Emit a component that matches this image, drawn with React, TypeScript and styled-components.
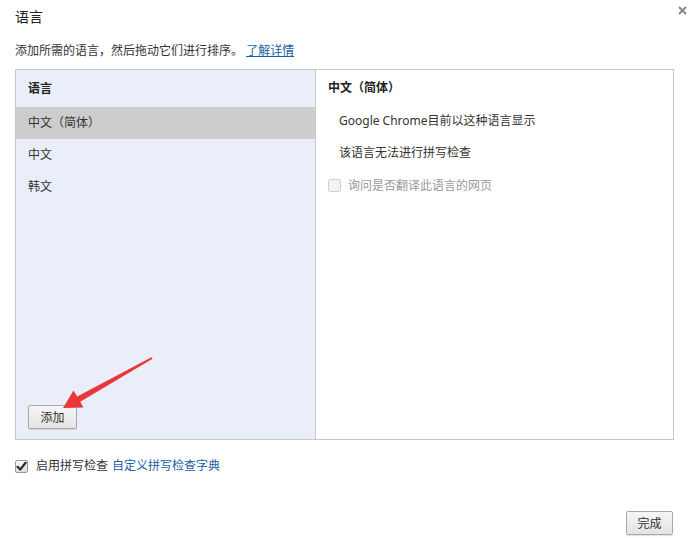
import styled, { createGlobalStyle } from 'styled-components';

const GlobalStyle = createGlobalStyle`
  html, body {
    margin: 0;
    padding: 0;
    background: #ffffff;
  }
  body {
    font-family: "Noto Sans", "Noto Sans CJK SC", sans-serif;
    font-size: 12px;
    color: #333333;
  }
`;

const languages = ['中文（简体）', '中文', '韩文'];

const Check = ({ checked, disabled }: { checked?: boolean; disabled?: boolean }) => (
  <Box $disabled={disabled}>
    {checked && (
      <svg width="11" height="11" viewBox="0 0 11 11">
        <path d="M1.5 5.8 L4.2 8.6 L9.6 1.8" fill="none" stroke="#2b2b2b" strokeWidth="2.2" strokeLinecap="round" strokeLinejoin="round" />
      </svg>
    )}
  </Box>
);

const App = () => {
  return (
    <Page>
      <GlobalStyle />
      <Header>
        <Title>语言</Title>
        <Close>
          <svg width="9" height="9" viewBox="0 0 9 9">
            <path d="M1 1 L8 8 M8 1 L1 8" stroke="#8a8a8a" strokeWidth="2" />
          </svg>
        </Close>
      </Header>

      <Intro>
        添加所需的语言，然后拖动它们进行排序。 <Link $underline>了解详情</Link>
      </Intro>

      <Panel>
        <LangColumn>
          <ColumnHead>语言</ColumnHead>
          {languages.map((lang, i) => (
            <LangRow key={lang} $selected={i === 0}>
              {lang}
            </LangRow>
          ))}
          <Spacer />
          <ButtonRow>
            <Button>添加</Button>
          </ButtonRow>
        </LangColumn>

        <DetailColumn>
          <DetailHead>中文（简体）</DetailHead>
          <DetailLine>Google Chrome目前以这种语言显示</DetailLine>
          <DetailLine>该语言无法进行拼写检查</DetailLine>
          <CheckLine $disabled>
            <Check disabled />
            询问是否翻译此语言的网页
          </CheckLine>
        </DetailColumn>
      </Panel>

      <SpellRow>
        <Check checked />
        启用拼写检查 <Link>自定义拼写检查字典</Link>
      </SpellRow>

      <Footer>
        <Button $wide>完成</Button>
      </Footer>

      <Arrow width="691" height="538" viewBox="0 0 691 538">
        <polygon
          points="152.6,358.8 151.4,357.2 77.2,396.6 73.5,390.6 63,408 83.5,407.6 80.2,401.8"
          fill="#e8363a"
        />
      </Arrow>
    </Page>
  );
};

export default App;

const Page = styled.div`
  position: relative;
  width: 691px;
  height: 538px;
  box-sizing: border-box;
  padding: 6px 17px 0 15px;
  display: flex;
  flex-direction: column;
`;

const Header = styled.div`
  display: flex;
  justify-content: space-between;
  align-items: flex-start;
  margin-right: -13px;
  height: 26px;
`;

const Title = styled.div`
  font-size: 14px;
  line-height: 22px;
  color: #222;
`;

const Close = styled.div`
  display: flex;
`;

const Intro = styled.div`
  margin-top: 10px;
  line-height: 18px;
  height: 18px;
  color: #333;
`;

const Link = styled.span<{ $underline?: boolean }>`
  color: #1c5fa5;
  text-decoration: ${(p) => (p.$underline ? 'underline' : 'none')};
`;

const Panel = styled.div`
  margin-top: 9px;
  height: 371px;
  box-sizing: border-box;
  border: 1px solid #c8c8c8;
  display: grid;
  grid-template-columns: 300px 1fr;
`;

const LangColumn = styled.div`
  background: #eaeef8;
  border-right: 1px solid #c8c8c8;
  display: flex;
  flex-direction: column;
`;

const ColumnHead = styled.div`
  height: 37px;
  line-height: 37px;
  padding-left: 12px;
  font-weight: bold;
  color: #222;
`;

const LangRow = styled.div<{ $selected?: boolean }>`
  height: 32px;
  line-height: 32px;
  padding-left: 12px;
  color: #333;
  background: ${(p) => (p.$selected ? '#cdcdcd' : 'transparent')};
`;

const Spacer = styled.div`
  flex: 1;
`;

const ButtonRow = styled.div`
  padding: 0 0 10px 12px;
`;

const Button = styled.button<{ $wide?: boolean }>`
  font-family: inherit;
  font-size: 12px;
  color: #333;
  height: 24px;
  width: ${(p) => (p.$wide ? '47px' : '49px')};
  padding: 0;
  border: 1px solid #a9a9a9;
  border-radius: 2px;
  background: linear-gradient(#f6f6f6, #e3e3e3);
  box-shadow: 0 1px 1px rgba(0, 0, 0, 0.12);
`;

const DetailColumn = styled.div`
  padding: 8px 12px;
  display: flex;
  flex-direction: column;
`;

const DetailHead = styled.div`
  height: 20px;
  line-height: 20px;
  margin-bottom: 7px;
  font-weight: bold;
  color: #222;
`;

const DetailLine = styled.div`
  height: 32px;
  line-height: 32px;
  padding-left: 11px;
`;

const CheckLine = styled.div<{ $disabled?: boolean }>`
  display: flex;
  align-items: center;
  gap: 7px;
  height: 32px;
  color: ${(p) => (p.$disabled ? '#9a9a9a' : '#333')};
`;

const Box = styled.span<{ $disabled?: boolean }>`
  width: 13px;
  height: 13px;
  box-sizing: border-box;
  border: 1px solid ${(p) => (p.$disabled ? '#d2d2d2' : '#9a9a9a')};
  border-radius: 2px;
  background: ${(p) => (p.$disabled ? '#f3f3f3' : 'linear-gradient(#fafafa, #dedede)')};
  display: inline-flex;
  align-items: center;
  justify-content: center;
  flex: none;
`;

const SpellRow = styled.div`
  margin-top: 18px;
  display: flex;
  align-items: center;
  gap: 8px;
  line-height: 16px;
  color: #333;

  ${Link} {
    margin-left: -4px;
  }
`;

const Footer = styled.div`
  display: flex;
  justify-content: flex-end;
  margin-top: 37px;
  margin-right: 1px;
`;

const Arrow = styled.svg`
  position: absolute;
  left: 0;
  top: 0;
  pointer-events: none;
`;
